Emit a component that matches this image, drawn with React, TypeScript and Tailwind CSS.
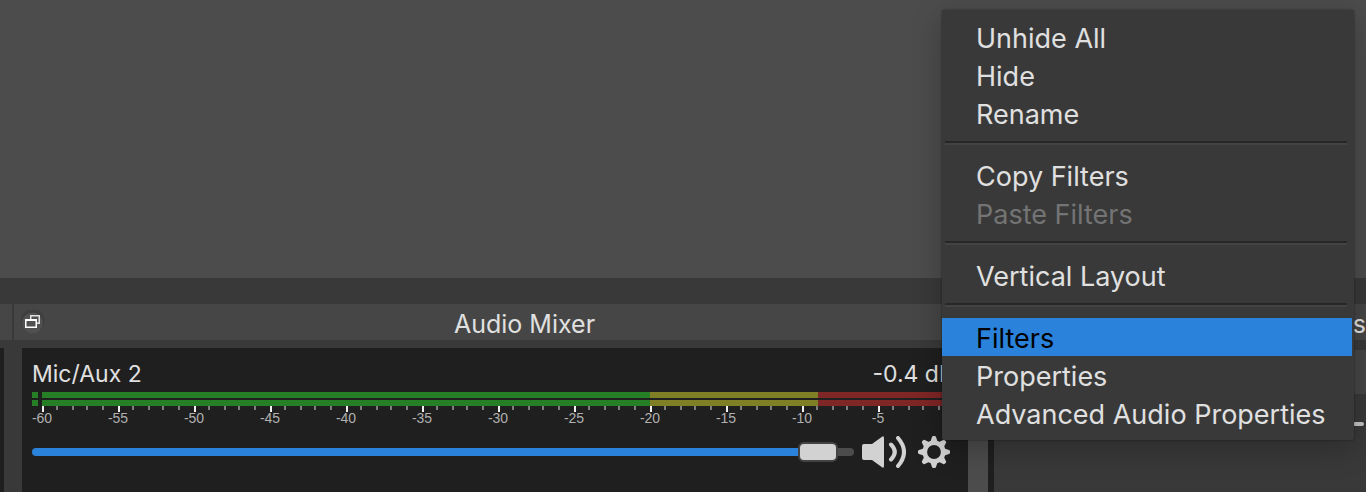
import React from "react";

const range = (n: number) => Array.from({ length: n }, (_, i) => i);

function Meter() {
  const tickX = (i: number) => Math.floor((i * 15.2 + 10) / 2) * 2;
  return (
    <svg className="block h-9 w-full" role="img" aria-label="Level meter, -60 to 0 decibels" shapeRendering="crispEdges">
      {[0, 8].map((y) => (
        <g key={y}>
          <rect x="0" y={y} width="6" height="6" fill="#267f26" />
          <rect x="10" y={y} width="608" height="6" fill="#267f26" />
          <rect x="618" y={y} width="168" height="6" fill="#7f7f26" />
          <rect x="786" y={y} width="138" height="6" fill="#7f2626" />
        </g>
      ))}
      {range(61).map((i) => (
        <rect key={i} x={tickX(i)} y="14" width="2" height={i % 5 ? 4 : 6} fill={i % 5 ? "#7f7f7f" : "#f0f0f0"} />
      ))}
      {range(12).map((i) => (
        <text key={i} x={tickX(i * 5)} y="31" textAnchor="middle" fontSize="14" fill="#b0b0b0" fontFamily="Liberation Sans, sans-serif">
          {i * 5 - 60}
        </text>
      ))}
    </svg>
  );
}

function SpeakerIcon() {
  return (
    <svg className="block h-8 w-11" viewBox="0 0 44 32" aria-hidden="true">
      <path d="M2 8H10L20 .7Q22 -.4 22 2V30Q22 32.400 20 31.300L10 24H2Q0 24 0 22V10Q0 8 2 8Z" fill="#d2d2d2" />
      <path d="M29 8.500Q36.500 16 29 23.500M36 2Q48 16 36 30" fill="none" stroke="#d2d2d2" strokeWidth="4" strokeLinecap="round" />
    </svg>
  );
}

function GearIcon() {
  return (
    <svg className="block size-8" viewBox="0 0 32 32" aria-hidden="true">
      <g fill="#d2d2d2">
        {range(8).map((i) => (
          <path key={i} d="M12 7L14 1Q14.300 0 15.300 0H16.700Q17.700 0 18 1L20 7Z" transform={`rotate(${i * 45} 16 16)`} />
        ))}
      </g>
      <circle cx="16" cy="16" r="9.250" fill="none" stroke="#d2d2d2" strokeWidth="4.700" />
    </svg>
  );
}

function FloatIcon() {
  return (
    <svg className="block size-6" viewBox="0 0 24 24" aria-hidden="true">
      <circle cx="11.500" cy="11" r="12" fill="#3e3e3e" />
      <circle cx="11.500" cy="13" r="10.500" fill="#505050" />
      <path d="M9.750 9V5.750H18.250V13.250H16" fill="none" stroke="#e0e0e0" strokeWidth="1.500" />
      <path d="M4.750 10H15.250V17.250H4.750Z" fill="#505050" stroke="#fff" strokeWidth="1.500" />
      <path d="M4 10H16" stroke="#fff" strokeWidth="2" />
    </svg>
  );
}

function MenuItem({ label, disabled, active }: { label: string; disabled?: boolean; active?: boolean }) {
  const tone = disabled ? "text-[#747474]" : active ? "bg-[#2a82da] text-black" : "text-[#e0e0e0]";
  return (
    <button type="button" role="menuitem" disabled={disabled} className={`block h-[38px] w-full pt-1 pl-[34px] text-left text-[27px] leading-8 whitespace-nowrap ${tone}`}>
      {label}
    </button>
  );
}

function Divider() {
  return <div role="separator" className="mt-[9px] mr-[5px] mb-[11px] ml-[3px] h-1 border-t-2 border-b-2 border-t-[#272727] border-b-[#434343]" />;
}

export default function App() {
  return (
    <div className="relative flex h-screen flex-col overflow-hidden bg-[#393939] font-['Inter',sans-serif] text-[#e0e0e0]">
      <main className="h-[278px] shrink-0 bg-[#4c4c4c]" />
      <div className="flex flex-1 gap-0.5 pt-[26px]">
        <section className="w-3 shrink-0">
          <div className="h-9 bg-[#464646]" />
          <div className="mt-2 mr-2 h-full bg-[#1f1f1f]" />
        </section>
        <section className="flex w-[990px] shrink-0 flex-col">
          <header className="flex h-9 items-center bg-[#464646] pl-[7px]">
            <button type="button" aria-label="Float dock"><FloatIcon /></button>
            <h2 className="flex-1 pt-1 text-center text-[25px] leading-8">Audio Mixer</h2>
          </header>
          <div className="mt-2 mr-2.5 ml-2 flex flex-1 bg-[#1f1f1f] pr-1.5">
            <div className="flex-1 px-2.5 pt-2.5">
              <div className="flex h-[34px] justify-between pr-1 text-[23px] leading-8">
                <label htmlFor="volume">Mic/Aux 2</label>
                <span>-0.4 dB</span>
              </div>
              <Meter />
              <div className="mt-2 flex items-center">
                <input
                  id="volume"
                  type="range"
                  min="0"
                  max="100"
                  defaultValue="98"
                  className="h-5 min-w-0 flex-1 appearance-none bg-transparent [&::-webkit-slider-runnable-track]:h-2 [&::-webkit-slider-runnable-track]:rounded-full [&::-webkit-slider-runnable-track]:bg-[linear-gradient(to_right,#2a82da_95%,#4c4c4c_95%)] [&::-webkit-slider-thumb]:-mt-1.5 [&::-webkit-slider-thumb]:h-5 [&::-webkit-slider-thumb]:w-10 [&::-webkit-slider-thumb]:appearance-none [&::-webkit-slider-thumb]:rounded-md [&::-webkit-slider-thumb]:border-2 [&::-webkit-slider-thumb]:border-[#444444] [&::-webkit-slider-thumb]:bg-[#d2d2d2]"
                />
                <button type="button" aria-label="Mute" className="ml-2"><SpeakerIcon /></button>
                <button type="button" aria-label="Audio settings" className="mr-2 ml-3"><GearIcon /></button>
              </div>
            </div>
            <div className="w-5 bg-[#4c4c4c]" />
          </div>
        </section>
        <section className="min-w-0 flex-1">
          <header className="flex h-9 items-center justify-end bg-[#464646]">
            <h2 className="pt-1 text-[25px] leading-8 whitespace-nowrap">Scene Transitions</h2>
          </header>
          <div className="mt-2.5 h-11 bg-[#464646]" />
          <div className="mt-7 mr-0.5 ml-auto h-1 w-4 rounded-full bg-[#c4c4c4]" />
        </section>
      </div>
      <div role="menu" className="absolute top-2.5 right-3 w-[412px] rounded-xs bg-[#393939] py-2 pr-0.5 shadow-[0_8px_30px_rgba(0,0,0,0.25),0_0_2px_rgba(0,0,0,0.5)]">
        <MenuItem label="Unhide All" />
        <MenuItem label="Hide" />
        <MenuItem label="Rename" />
        <Divider />
        <MenuItem label="Copy Filters" />
        <MenuItem label="Paste Filters" disabled />
        <Divider />
        <MenuItem label="Vertical Layout" />
        <Divider />
        <MenuItem label="Filters" active />
        <MenuItem label="Properties" />
        <MenuItem label="Advanced Audio Properties" />
      </div>
    </div>
  );
}
